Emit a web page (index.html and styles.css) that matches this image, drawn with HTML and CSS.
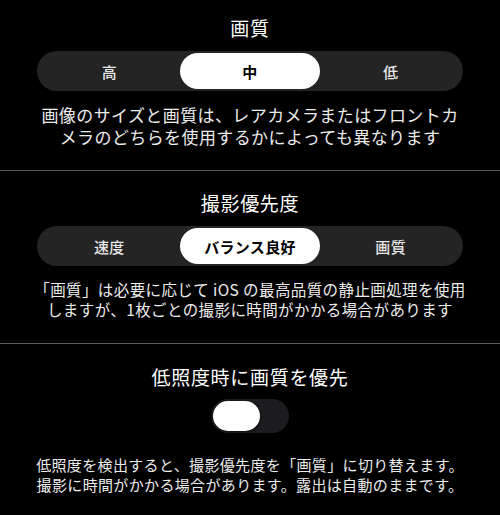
FILE: index.html
```html
<!DOCTYPE html>
<html lang="ja">
<head>
<meta charset="utf-8" />
<title>画質設定</title>
<link rel="stylesheet" href="styles.css">
</head>
<body>
	<div class="wrap">
		<div class="section first">
			<p class="title">画質</p>
			<div class="seg">
				<span class="opt">高</span>
				<span class="opt on">中</span>
				<span class="opt">低</span>
			</div>
			<p class="desc">画像のサイズと画質は、レアカメラまたはフロントカ<br>メラのどちらを使用するかによっても異なります</p>
		</div>

		<div class="section second">
			<p class="title">撮影優先度</p>
			<div class="seg">
				<span class="opt">速度</span>
				<span class="opt on">バランス良好</span>
				<span class="opt">画質</span>
			</div>
			<p class="desc">「画質」は必要に応じて iOS の最高品質の静止画処理を使用<br>しますが、1枚ごとの撮影に時間がかかる場合があります</p>
		</div>

		<div class="section last">
			<p class="title">低照度時に画質を優先</p>
			<div class="switch"><span class="knob"></span></div>
			<p class="desc">低照度を検出すると、撮影優先度を「画質」に切り替えます。<br>撮影に時間がかかる場合があります。露出は自動のままです。</p>
		</div>
	</div>
</body>
</html>
```

FILE: styles.css
```css
body, div, p{margin:0; padding:0;}

body {background:#000; color:#fff; font-family:"Noto Sans CJK JP", "Noto Sans", sans-serif;}

.wrap {width:500px; height:515px; overflow:hidden;}

.section {padding:20px 30px 22px; border-bottom:1px solid #5a5a5a; display:flex; flex-direction:column; align-items:center;}
.section.first {padding-top:16px;}
.section.second {padding-bottom:24px;}
.section.last {border-bottom:0; padding-top:21px;}

.title {font-size:19px; letter-spacing:0.7px; line-height:24px; color:#fff; text-align:center;}

.seg {width:426px; box-sizing:border-box; height:40px; margin-top:11px; padding:2px; border-radius:20px; background:#242424; display:grid; grid-template-columns:1fr 1fr 1fr;}
.seg .opt {display:flex; align-items:center; justify-content:center; font-size:15px; letter-spacing:0.3px; font-weight:500; color:#e8e8e8; border-radius:18px;}
.seg .opt.on {background:#fff; color:#000; font-weight:600;}

.desc {margin-top:13px; font-size:17px; letter-spacing:0.4px; line-height:22px; color:#ececec; text-align:center; white-space:nowrap;}
.second .desc {font-size:15.5px; letter-spacing:0.4px; line-height:20px;}
.last .desc {margin-top:22px; font-size:15px; letter-spacing:0.35px; line-height:20px;}

.switch {margin-top:10px; width:78px; height:34px; box-sizing:border-box; padding:2px; border-radius:17px; background:#1c1c1e; display:flex;}
.switch .knob {width:47px; height:30px; border-radius:15px; background:#fff; box-shadow:0 1px 3px rgba(0,0,0,0.4);}
```
